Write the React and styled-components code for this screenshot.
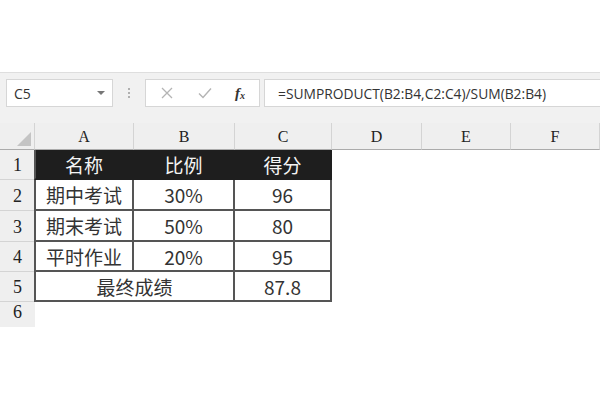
import React from 'react';
import styled, { createGlobalStyle } from 'styled-components';

const GlobalStyle = createGlobalStyle`
  html, body {
    margin: 0;
    padding: 0;
    background: #ffffff;
  }
  body {
    width: 600px;
    height: 400px;
    overflow: hidden;
    font-family: "Noto Sans CJK SC", "Noto Sans", sans-serif;
  }
`;

const colWidths = '35px 99px 101px 97px 90px 89px 89px';

const rows = [
  ['期中考试', '30%', '96'],
  ['期末考试', '50%', '80'],
  ['平时作业', '20%', '95'],
];

export default function App() {
  return (
    <>
      <GlobalStyle />
      <Page>
        <TopSpace />
        <FormulaBar>
          <NameBox>
            <span>C5</span>
            <Caret />
          </NameBox>
          <Dots>
            <i /><i /><i />
          </Dots>
          <ButtonBox>
            <IconBtn>
              <svg width="14" height="14" viewBox="0 0 14 14">
                <path d="M2 2 L12 12 M12 2 L2 12" stroke="#b4b4b4" strokeWidth="1.3" fill="none" />
              </svg>
            </IconBtn>
            <IconBtn>
              <svg width="16" height="14" viewBox="0 0 16 14">
                <path d="M2 7.5 L6 11.5 L14 2.5" stroke="#b4b4b4" strokeWidth="1.4" fill="none" />
              </svg>
            </IconBtn>
            <Fx>f<sub>x</sub></Fx>
          </ButtonBox>
          <FormulaInput>=SUMPRODUCT(B2:B4,C2:C4)/SUM(B2:B4)</FormulaInput>
        </FormulaBar>
        <Sheet>
          <Corner />
          {['A', 'B', 'C', 'D', 'E', 'F'].map((c) => (
            <ColHead key={c}>{c}</ColHead>
          ))}

          <RowHead>1</RowHead>
          <Cell $dark $first>名称</Cell>
          <Cell $dark>比例</Cell>
          <Cell $dark>得分</Cell>
          <Blank />

          {rows.map((r, i) => (
            <React.Fragment key={i}>
              <RowHead>{i + 2}</RowHead>
              <Cell $first>{r[0]}</Cell>
              <Cell>{r[1]}</Cell>
              <Cell>{r[2]}</Cell>
            </React.Fragment>
          ))}

          <RowHead>5</RowHead>
          <Cell $first $span={2}>最终成绩</Cell>
          <Cell>87.8</Cell>

          <RowHead $last>6</RowHead>
          <EmptyRow />
        </Sheet>
      </Page>
    </>
  );
}

const Page = styled.div`
  display: flex;
  flex-direction: column;
  width: 600px;
`;

const TopSpace = styled.div`
  height: 73px;
  border-bottom: 1px solid #dedede;
  box-sizing: border-box;
`;

const FormulaBar = styled.div`
  display: flex;
  align-items: center;
  height: 50px;
  background: #f1f1f1;
  padding: 0 0 10px 6px;
  box-sizing: border-box;
`;

const NameBox = styled.div`
  width: 107px;
  height: 28px;
  box-sizing: border-box;
  background: #fff;
  border: 1px solid #d6d6d6;
  display: flex;
  align-items: center;
  justify-content: space-between;
  padding: 0 7px 0 7px;
  font-family: "Open Sans", "Liberation Sans", sans-serif;
  font-size: 14px;
  color: #333;
`;

const Caret = styled.div`
  width: 0;
  height: 0;
  border-left: 4px solid transparent;
  border-right: 4px solid transparent;
  border-top: 4px solid #777;
`;

const Dots = styled.div`
  width: 32px;
  display: flex;
  flex-direction: column;
  align-items: center;
  gap: 2px;
  i {
    display: block;
    width: 2px;
    height: 2px;
    background: #b0b0b0;
  }
`;

const ButtonBox = styled.div`
  width: 115px;
  height: 28px;
  box-sizing: border-box;
  background: #fff;
  border: 1px solid #d6d6d6;
  display: flex;
  align-items: center;
  padding-left: 12px;
  gap: 20px;
`;

const IconBtn = styled.div`
  width: 18px;
  display: flex;
  align-items: center;
  justify-content: center;
`;

const Fx = styled.div`
  font-family: "Liberation Serif", serif;
  font-style: italic;
  font-weight: bold;
  font-size: 15px;
  color: #333;
  margin-left: 1px;
  sub {
    font-size: 10px;
    vertical-align: -1px;
  }
`;

const FormulaInput = styled.div`
  flex: 1;
  height: 28px;
  box-sizing: border-box;
  margin-left: 4px;
  background: #fff;
  border: 1px solid #d6d6d6;
  border-right: none;
  display: flex;
  align-items: center;
  padding-left: 13px;
  font-family: "Open Sans", "Liberation Sans", sans-serif;
  font-size: 13.8px;
  color: #333;
  white-space: nowrap;
`;

const Sheet = styled.div`
  display: grid;
  grid-template-columns: ${colWidths};
  grid-template-rows: 27px 30px 31px 31px 30px 30px 25px;
  background: #fff;
`;

const Corner = styled.div`
  background: #efefef;
  border-bottom: 1px solid #ababab;
  border-right: 1px solid #d4d4d4;
  position: relative;
  &::after {
    content: '';
    position: absolute;
    right: 3px;
    bottom: 3px;
    width: 0;
    height: 0;
    border-left: 14px solid transparent;
    border-bottom: 14px solid #c4c4c4;
  }
`;

const ColHead = styled.div`
  background: #efefef;
  border-bottom: 1px solid #ababab;
  border-right: 1px solid #d4d4d4;
  display: flex;
  align-items: center;
  justify-content: center;
  font-family: "Liberation Serif", "DejaVu Serif", serif;
  font-size: 16px;
  color: #222;
  padding-top: 2px;
`;

const RowHead = styled.div`
  background: #efefef;
  border-bottom: 1px solid ${(p) => (p.$last ? 'transparent' : '#d4d4d4')};
  display: flex;
  align-items: flex-end;
  justify-content: center;
  padding-bottom: 3px;
  box-sizing: border-box;
  font-family: "Liberation Serif", "DejaVu Serif", serif;
  font-size: 18px;
  color: #222;
`;

const Cell = styled.div`
  grid-column: span ${(p) => p.$span || 1};
  background: ${(p) => (p.$dark ? '#1e1e1e' : '#fff')};
  color: ${(p) => (p.$dark ? '#f4f4f4' : '#333')};
  border-right: 2px solid ${(p) => (p.$dark ? '#1e1e1e' : '#555')};
  border-bottom: 2px solid ${(p) => (p.$dark ? '#1e1e1e' : '#555')};
  border-left: ${(p) => (p.$first ? '2px solid #555' : 'none')};
  margin-left: ${(p) => (p.$first ? '-1px' : '0')};
  display: flex;
  align-items: center;
  justify-content: center;
  font-size: 19px;
  line-height: 1;
  box-sizing: border-box;
  &:last-of-type {
    border-right-color: #555;
  }
`;

const Blank = styled.div`
  grid-row: span 6;
  grid-column: span 3;
  background: #fff;
`;

const EmptyRow = styled.div`
  grid-column: span 3;
  background: #fff;
`;
